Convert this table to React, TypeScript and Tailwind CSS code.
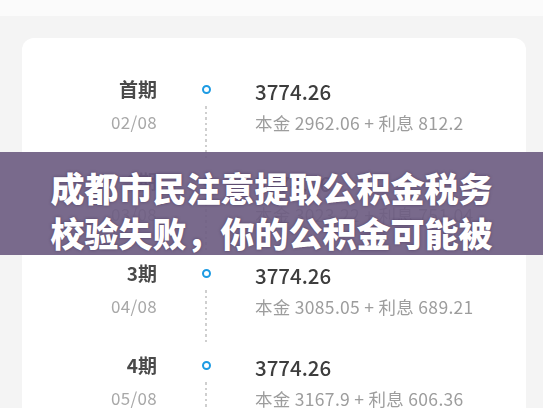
import React from 'react';

type Row = { title: string; date: string; amount: string; principal: string; interest: string };

const rows: Row[] = [
  { title: '首期', date: '02/08', amount: '3774.26', principal: '2962.06', interest: '812.2' },
  { title: '2期', date: '03/08', amount: '3774.26', principal: '3023.22', interest: '751.04' },
  { title: '3期', date: '04/08', amount: '3774.26', principal: '3085.05', interest: '689.21' },
  { title: '4期', date: '05/08', amount: '3774.26', principal: '3167.9', interest: '606.36' },
];

const font = { fontFamily: '"Noto Sans CJK SC", "Noto Sans", sans-serif' };

const Dots: React.FC = () => (
  <div className="flex flex-col items-center gap-[3px] mt-[4px]">
    {Array.from({ length: 10 }).map((_, i) => (
      <div key={i} className="w-[2px] h-[2.5px] bg-[#cfcfcf]" />
    ))}
  </div>
);

const PlanRow: React.FC<{ row: Row }> = ({ row }) => (
  <div className="flex h-[92px]">
    <div className="w-[135px] flex flex-col items-end">
      <div className="h-[26px] leading-[26px] text-[19px] font-semibold text-[#4a4a4a]">{row.title}</div>
      <div className="mt-[9px] h-[22px] leading-[22px] text-[17px] text-[#a8a8a8] tracking-[0.3px]">{row.date}</div>
    </div>
    <div className="w-[98px] flex flex-col items-center">
      <div className="h-[26px] flex items-center">
        <div className="w-[9px] h-[9px] rounded-full border-[2.5px] border-[#1d9be3] bg-white" />
      </div>
      <Dots />
    </div>
    <div className="flex-1 flex flex-col">
      <div className="h-[26px] leading-[26px] text-[20.5px] font-medium text-[#3d3d3d] mt-[2px]">{row.amount}</div>
      <div className="mt-[8px] h-[22px] leading-[22px] text-[17.5px] text-[#9d9d9d] tracking-[0.3px]">
        本金 {row.principal} + 利息 {row.interest}
      </div>
    </div>
  </div>
);

export default function App() {
  return (
    <div className="relative w-[543px] h-[408px] overflow-hidden bg-[#f4f4f4]" style={font}>
      <div className="blur-[0.5px]">
        <div className="h-[16px] bg-[#fbfbfb]" />
        <div className="ml-[22px] mr-[17px] mt-[22px] bg-white rounded-[12px] pt-[38px] pb-4">
          {rows.map((r) => (
            <PlanRow key={r.title} row={r} />
          ))}
        </div>
      </div>

      {/* title banner */}
      <div className="absolute left-0 right-0 top-[152px] h-[103px] bg-[#6e5d82]/[0.92] pt-[13px] text-center">
        <div className="text-white text-[34px] leading-[45px] font-black [text-shadow:0_0_3px_rgba(40,20,60,0.5)]">
          成都市民注意提取公积金税务
        </div>
        <div className="text-white text-[34px] leading-[45px] font-black [text-shadow:0_0_3px_rgba(40,20,60,0.5)]">
          校验失败，你的公积金可能被
        </div>
      </div>
    </div>
  );
}
